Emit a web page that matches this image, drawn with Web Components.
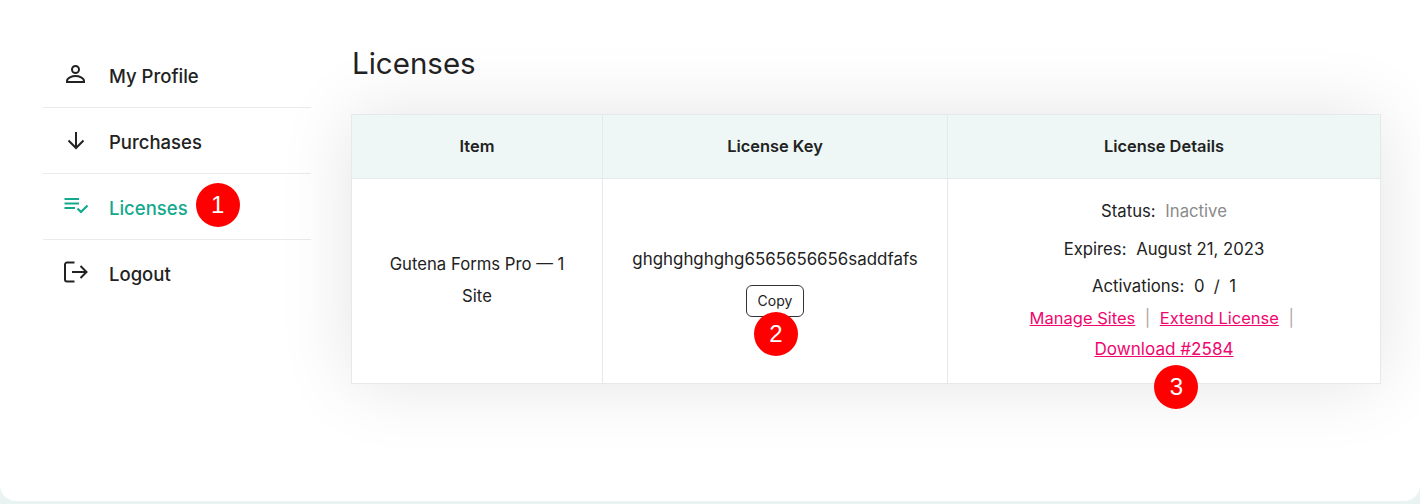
<!DOCTYPE html>
<html lang="en">
<head>
<meta charset="utf-8">
<title>Licenses</title>
<style>
  html { background: #e9f4f2; }
  body { margin: 0; font-family: Inter, "Liberation Sans", sans-serif; color: #222; }
</style>
</head>
<body>
<account-page>
  <side-nav slot="nav">
    <nav-item label="My Profile" icon="person"></nav-item>
    <nav-item label="Purchases" icon="down"></nav-item>
    <nav-item label="Licenses" icon="checklist" active badge="1"></nav-item>
    <nav-item label="Logout" icon="logout"></nav-item>
  </side-nav>
  <license-table></license-table>
</account-page>

<script>
// 页面外壳：左侧导航 + 右侧内容
class AccountPage extends HTMLElement {
  constructor() {
    super();
    this.attachShadow({ mode: 'open' });
    this.shadowRoot.innerHTML = `
      <style>
        :host {
          display: flex;
          box-sizing: border-box;
          height: 501px;
          padding: 42px 39px 0 43px;
          gap: 40px;
          background: #fff;
          border-radius: 0 0 16px 16px;
          overflow: hidden;
        }
        .nav { flex: 0 0 268px; }
        .main { flex: 1; min-width: 0; }
        h1 {
          margin: 0 0 30px 1px;
          font-size: 29.5px;
          line-height: 42px;
          font-weight: 400;
          color: #222;
        }
      </style>
      <div class="nav"><slot name="nav"></slot></div>
      <div class="main">
        <h1>Licenses</h1>
        <slot></slot>
      </div>
    `;
  }
}

class SideNav extends HTMLElement {
  constructor() {
    super();
    this.attachShadow({ mode: 'open' });
    this.shadowRoot.innerHTML = `
      <style>:host { display: flex; flex-direction: column; }</style>
      <slot></slot>
    `;
  }
}

const NAV_ICONS = {
  person: '<circle cx="11.5" cy="7.500" r="3.500"/><path d="M3 20v-1c0-3 5-5 8.500-5s8.500 2 8.500 5v1z"/>',
  down: '<path d="M12 4v16M4.500 12.500L12 20l7.500-7.500"/>',
  checklist: '<path d="M.5 5H15M.5 9.500H15M.5 14H11" stroke-width="2.200"/><path d="M13.500 14.500l3.500 3.500 6.500-6.500" stroke-width="2.200"/>',
  logout: '<path d="M10.500 2.500H3a2 2 0 0 0-2 2v15a2 2 0 0 0 2 2h7.500M8 12h14.500M16.500 6l6 6-6 6"/>'
};

class NavItem extends HTMLElement {
  connectedCallback() {
    if (this.shadowRoot) return;
    this.attachShadow({ mode: 'open' });
    const icon = NAV_ICONS[this.getAttribute('icon')] || '';
    const badge = this.getAttribute('badge');
    this.shadowRoot.innerHTML = `
      <style>
        :host {
          display: flex;
          align-items: center;
          box-sizing: border-box;
          height: 66px;
          padding-top: 2px;
          border-bottom: 1px solid #ebebeb;
          font-size: 18.5px;
          font-weight: 500;
          color: #222;
        }
        :host(:last-child) { border-bottom: 0; }
        :host([active]) { color: #13a98d; }
        svg {
          width: 24px;
          height: 24px;
          margin: 0 25px 4px 21px;
          fill: none;
          stroke: currentColor;
          stroke-width: 2;
          flex: none;
        }
        .label { position: relative; margin-left: -4px; }
        annot-badge { position: absolute; left: calc(100% + 8px); top: 50%; margin-top: -25px; }
      </style>
      <svg viewBox="0 0 24 24">${icon}</svg>
      <span class="label">${this.getAttribute('label')}${badge ? `<annot-badge>${badge}</annot-badge>` : ''}</span>
    `;
  }
}

// 红色圆形标注
class AnnotBadge extends HTMLElement {
  constructor() {
    super();
    this.attachShadow({ mode: 'open' });
    this.shadowRoot.innerHTML = `
      <style>
        :host {
          display: flex;
          align-items: center;
          justify-content: center;
          width: 44px;
          height: 44px;
          border-radius: 50%;
          background: #f00;
          color: #fff;
          font: 400 24px "Liberation Sans", Arial, sans-serif;
        }
      </style>
      <slot></slot>
    `;
  }
}

class CopyButton extends HTMLElement {
  constructor() {
    super();
    this.attachShadow({ mode: 'open' });
    this.shadowRoot.innerHTML = `
      <style>
        :host {
          display: inline-flex;
          align-items: center;
          justify-content: center;
          box-sizing: border-box;
          width: 58px;
          height: 32px;
          border: 1px solid #333;
          border-radius: 6px;
          background: #fff;
          color: #222;
          font: 400 14px Inter, "Liberation Sans", sans-serif;
        }
      </style>
      <slot></slot>
    `;
  }
}

class LicenseTable extends HTMLElement {
  constructor() {
    super();
    this.attachShadow({ mode: 'open' });
    this.shadowRoot.innerHTML = `
      <style>
        :host {
          display: block;
          box-shadow: 0 0 70px rgba(0, 0, 0, .11);
          font-size: 16.7px;
          color: #222;
        }
        .grid {
          display: grid;
          grid-template-columns: 251px 345px 433px;
          grid-template-rows: 64px 205px;
          border: solid #e6e9e9;
          border-width: 1px 0 0 1px;
          background: #fff;
          text-align: center;
        }
        .cell {
          position: relative;
          border: solid #e6e9e9;
          border-width: 0 1px 1px 0;
          display: flex;
          flex-direction: column;
          align-items: center;
          justify-content: center;
          box-sizing: border-box;
          padding: 0 30px;
        }
        .head { background: #eef7f6; font-weight: 600; font-size: 16.4px; padding-bottom: 2px; }
        .item { line-height: 32px; padding-bottom: 2px; }
        .key { padding-bottom: 3px; }
        .key p { margin: 0 0 10px; line-height: 32px; font-size: 16.9px; }
        .rel { position: relative; display: block; }
        .rel annot-badge { position: absolute; }
        .key annot-badge { left: 8px; top: 27px; }
        .details { padding: 14px 0 0; justify-content: flex-start; }
        .details p { margin: 0; }
        .line { line-height: 37.5px; }
        .line b { font-weight: 400; margin-right: 5px; }
        .muted { color: #8a8a8a; }
        .links { line-height: 31px; font-size: 16.5px; }
        .links.first { margin-top: -3px; }
        .details .links.last { margin-top: -1px; }
        a { color: #f0066e; text-decoration: underline; }
        .sep { color: #b0a79f; margin: 0 9.5px; }
        .sep:last-child { margin-right: 4.5px; }
        .dl { position: relative; font-size: 17.1px; }
        .dl annot-badge { position: absolute; left: 60px; top: 27px; }
      </style>
      <div class="grid">
        <div class="cell head">Item</div>
        <div class="cell head">License Key</div>
        <div class="cell head">License Details</div>
        <div class="cell item">Gutena Forms Pro — 1 Site</div>
        <div class="cell key">
          <p>ghghghghghg6565656656saddfafs</p>
          <span class="rel"><copy-button>Copy</copy-button><annot-badge>2</annot-badge></span>
        </div>
        <div class="cell details">
          <p class="line"><b>Status:</b> <span class="muted">Inactive</span></p>
          <p class="line"><b>Expires:</b> August 21, 2023</p>
          <p class="line"><b>Activations:</b> 0 &nbsp;/&nbsp; 1</p>
          <p class="links first"><a>Manage Sites</a><span class="sep">|</span><a>Extend License</a><span class="sep">|</span></p>
          <p class="links last"><span class="dl"><a>Download #2584</a><annot-badge>3</annot-badge></span></p>
        </div>
      </div>
    `;
  }
}

customElements.define('account-page', AccountPage);
customElements.define('side-nav', SideNav);
customElements.define('nav-item', NavItem);
customElements.define('annot-badge', AnnotBadge);
customElements.define('copy-button', CopyButton);
customElements.define('license-table', LicenseTable);
</script>
</body>
</html>
